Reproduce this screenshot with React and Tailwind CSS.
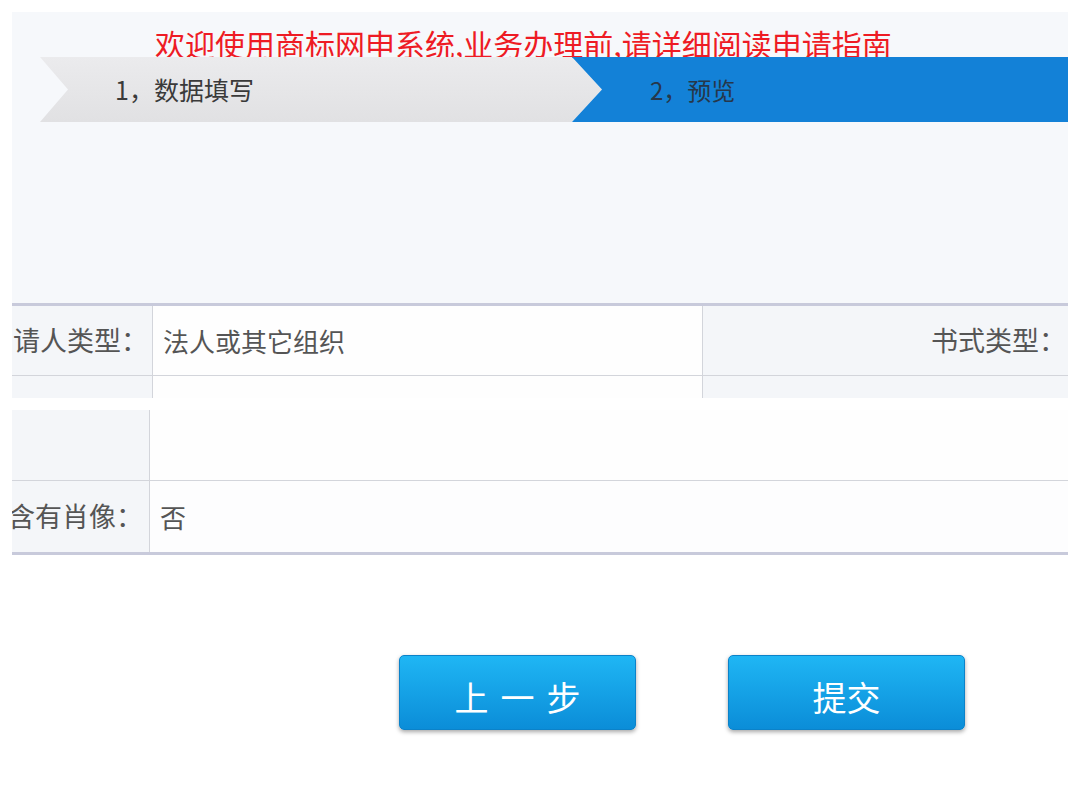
import React from 'react';

const font = "font-['Noto_Sans_CJK_SC','Liberation_Sans',sans-serif]";

const StepBar = () => (
  <div className="relative z-10 -mt-[1px] ml-[28px] flex h-[65px]">
    <div className="flex w-[562px] items-center bg-gradient-to-b from-[#ebebed] to-[#e1e1e3] pl-[75px] [clip-path:polygon(0_0,calc(100%_-_30px)_0,100%_50%,calc(100%_-_30px)_100%,0_100%,28px_50%)]">
      <span className="text-[25px] leading-none text-[#3a3a3a]">1，数据填写</span>
    </div>
    <div className="-ml-[30px] flex flex-1 items-center bg-[#1381d7] pl-[78px] [clip-path:polygon(0_0,100%_0,100%_100%,0_100%,30px_50%)]">
      <span className="text-[24px] leading-none text-[#26374a]">2，预览</span>
    </div>
  </div>
);

const Label = ({ children, className = '' }) => (
  <div className={`flex items-center justify-end overflow-hidden whitespace-nowrap bg-[#f4f6f9] ${className}`}>
    {children}
  </div>
);

export default function App() {
  return (
    <div className={`min-h-[810px] bg-white px-3 pt-3 ${font}`}>
      {/* upper panel */}
      <div className="bg-[#f6f8fb]">
        <div className="pl-[143px] pt-[16px] text-[30px] leading-none whitespace-nowrap text-[#ee1b24]">
          欢迎使用商标网申系统,业务办理前,请详细阅读申请指南
        </div>
        <StepBar />
        <div className="h-[181px]" />

        <div className="border-t-[3px] border-[#c8cadb] text-[26px] text-[#555]">
          <div className="flex h-[70px] border-b border-[#d3d5db]">
            <Label className="w-[141px] border-r border-[#d3d5db] pr-[4px] text-[27px]">请人类型：</Label>
            <div className="flex w-[550px] items-center border-r border-[#d3d5db] bg-[#fefefe] pl-[10px]">
              法人或其它组织
            </div>
            <Label className="flex-1 pr-[2px] text-[27px]">书式类型：</Label>
          </div>
          <div className="flex h-[22px]">
            <div className="w-[141px] border-r border-[#d3d5db] bg-[#f4f6f9]" />
            <div className="w-[550px] border-r border-[#d3d5db] bg-[#fefefe]" />
            <div className="flex-1 bg-[#f4f6f9]" />
          </div>
        </div>
      </div>

      {/* lower table */}
      <div className="mt-[12px] text-[26px] text-[#555]">
        <div className="flex h-[71px] border-b border-[#d3d5db]">
          <div className="w-[138px] border-r border-[#d3d5db] bg-[#f4f6f9]" />
          <div className="flex-1 bg-[#fefefe]" />
        </div>
        <div className="flex h-[74px] border-b-[3px] border-[#c8cadb]">
          <Label className="w-[138px] border-r border-[#d3d5db] pr-[6px] text-[27px]">是否含有肖像：</Label>
          <div className="flex flex-1 items-center bg-[#fdfdfe] pl-[10px]">否</div>
        </div>
      </div>

      {/* buttons */}
      <div className="mt-[100px] flex gap-[92px] pl-[387px]">
        <button className="flex h-[75px] w-[237px] items-center justify-center rounded-[5px] border border-[#0b82c9] bg-gradient-to-b from-[#1fb6f4] to-[#0b8dd8] pt-[8px] pl-[12px] text-[34px] leading-none tracking-[12px] text-white shadow-[0_2px_4px_rgba(0,0,0,0.35)]">
          上一步
        </button>
        <button className="flex h-[75px] w-[237px] items-center justify-center rounded-[5px] border border-[#0b82c9] bg-gradient-to-b from-[#1fb6f4] to-[#0b8dd8] pt-[8px] text-[34px] leading-none text-white shadow-[0_2px_4px_rgba(0,0,0,0.35)]">
          提交
        </button>
      </div>
    </div>
  );
}
